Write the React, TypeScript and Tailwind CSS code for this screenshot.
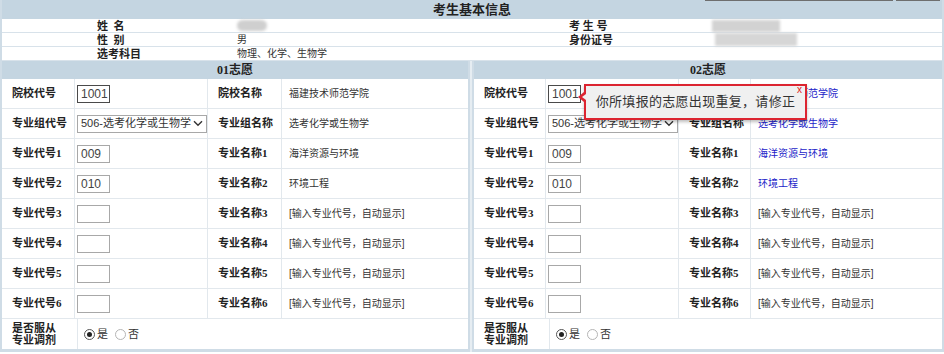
import React from "react";

const SERIF = "font-['Liberation_Serif','Noto_Sans_CJK_SC',serif]";
const SANS = "font-['Liberation_Sans','Noto_Sans_CJK_SC',sans-serif]";

type Row = {
  label: string;
  code?: string;
  dark?: boolean;
  select?: string;
  label2: string;
  value?: string;
};

const ROWS: Row[] = [
  { label: "院校代号", code: "1001", dark: true, label2: "院校名称", value: "福建技术师范学院" },
  { label: "专业组代号", select: "506-选考化学或生物学", label2: "专业组名称", value: "选考化学或生物学" },
  { label: "专业代号1", code: "009", label2: "专业名称1", value: "海洋资源与环境" },
  { label: "专业代号2", code: "010", label2: "专业名称2", value: "环境工程" },
  { label: "专业代号3", code: "", label2: "专业名称3" },
  { label: "专业代号4", code: "", label2: "专业名称4" },
  { label: "专业代号5", code: "", label2: "专业名称5" },
  { label: "专业代号6", code: "", label2: "专业名称6" },
];

function CodeBox({ value, dark }: { value: string; dark?: boolean }) {
  return (
    <div
      className={`w-[33px] h-[18px] border bg-white flex items-center px-[3px] text-[12px] text-[#444] ${SANS} ${
        dark ? "border-[#4a4a4a]" : "border-[#a8a8a8]"
      }`}
    >
      {value}
    </div>
  );
}

function SelectBox({ value }: { value: string }) {
  return (
    <div className={`w-[131px] h-[18px] border border-[#a8a8a8] bg-white flex items-center justify-between pl-[3px] pr-[3px] text-[11px] text-[#333] overflow-hidden ${SANS}`}>
      <span className="whitespace-nowrap">{value}</span>
      <svg width="10" height="7" viewBox="0 0 10 7" fill="none" stroke="#333" strokeWidth="1.4" className="shrink-0">
        <path d="M1 1.2 5 5.2 9 1.2" />
      </svg>
    </div>
  );
}

function Radio({ checked, label }: { checked?: boolean; label: string }) {
  return (
    <span className={`inline-flex items-center gap-[2px] text-[11px] text-[#333] ${SANS}`}>
      <span
        className={`w-[11px] h-[11px] rounded-full border bg-white flex items-center justify-center ${
          checked ? "border-[#555]" : "border-[#b5b5b5]"
        }`}
      >
        {checked && <span className="w-[5px] h-[5px] rounded-full bg-[#222]" />}
      </span>
      {label}
    </span>
  );
}

function Panel({ title, blue, cols }: { title: string; blue?: boolean; cols: string }) {
  return (
    <div className="flex flex-col border-x-2 border-b-[3px] border-[#cfdce6] bg-white">
      <div className={`h-[18px] bg-[#c4d5e1] flex items-center justify-center text-[12px] font-bold text-[#222] ${SERIF}`}>
        {title}
      </div>
      {ROWS.map((r) => (
        <div key={r.label} className={`grid ${cols} h-[30px] border-b border-[#e2e8ed]`}>
          <div className={`flex items-center pl-[10px] border-r border-[#e2e8ed] text-[11px] font-bold text-[#222] whitespace-nowrap ${SERIF}`}>
            {r.label}
          </div>
          <div className="flex items-center pl-[2px] border-r border-[#e2e8ed]">
            {r.select ? <SelectBox value={r.select} /> : <CodeBox value={r.code ?? ""} dark={r.dark} />}
          </div>
          <div className={`flex items-center pl-[10px] border-r border-[#e2e8ed] text-[11px] font-bold text-[#222] whitespace-nowrap ${SERIF}`}>
            {r.label2}
          </div>
          <div className={`flex items-center pl-[7px] text-[10px] whitespace-nowrap ${SANS}`}>
            {r.value ? (
              <span className={blue ? "text-[#1c1cc8]" : "text-[#333]"}>{r.value}</span>
            ) : (
              <span className="text-[#333]">[输入专业代号，自动显示]</span>
            )}
          </div>
        </div>
      ))}
      <div className="grid grid-cols-[76px_1fr] h-[30px]">
        <div className={`flex flex-col justify-center pl-[10px] border-r border-[#e2e8ed] text-[11px] leading-[12px] font-bold text-[#222] ${SERIF}`}>
          <span>是否服从</span>
          <span>专业调剂</span>
        </div>
        <div className="flex items-center gap-[7px] pl-[6px]">
          <Radio checked label="是" />
          <Radio label="否" />
        </div>
      </div>
    </div>
  );
}

function InfoRow({ label, value, label2, value2 }: { label: string; value: React.ReactNode; label2?: string; value2?: React.ReactNode }) {
  const lab = `shrink-0 text-[11px] font-bold text-[#222] leading-[14px] whitespace-pre ${SERIF}`;
  return (
    <div className="flex h-[14px] border-b border-[#d8e2ea]">
      <div className="w-[95px] shrink-0" />
      <div className={`w-[140px] ${lab}`}>{label}</div>
      <div className={`w-[332px] shrink-0 flex items-center text-[10px] leading-[14px] text-[#333] ${SANS}`}>{value}</div>
      <div className={`w-[141px] ${lab}`}>{label2}</div>
      <div className="flex-1 flex items-center">{value2}</div>
    </div>
  );
}

export default function App() {
  return (
    <div className="relative w-[944px] h-[354px] overflow-hidden bg-white">
      <div className="absolute top-0 left-[705px] w-[188px] h-px bg-[#6e6e6e]" />
      <div className="absolute top-0 left-[896px] w-[44px] h-px bg-[#6e6e6e]" />

      {/* basic info */}
      <div className="border-x-2 border-[#cfdce6]">
        <div className={`h-[19px] bg-[#c4d5e1] flex items-center justify-center text-[13px] font-bold text-[#222] ${SERIF}`}>
          考生基本信息
        </div>
        <InfoRow
          label="姓  名"
          value={<div className="w-[30px] h-[11px] rounded-full bg-[#cfcfcf] blur-[1.5px]" />}
          label2="考 生 号"
          value2={<div className="ml-[2px] w-[68px] h-[12px] bg-[#d2d2d2] blur-[1.5px]" />}
        />
        <InfoRow
          label="性  别"
          value={<span>男</span>}
          label2="身份证号"
          value2={<div className="ml-[5px] w-[82px] h-[13px] bg-[#d6d6d6] blur-[1.5px]" />}
        />
        <InfoRow label="选考科目" value={<span>物理、化学、生物学</span>} />
      </div>

      {/* two choices */}
      <div className="grid grid-cols-[470px_1fr] gap-[2px] bg-[#e6edf2]">
        <Panel title="01志愿" cols="grid-cols-[73px_133px_74px_1fr]" />
        <Panel title="02志愿" blue cols="grid-cols-[72px_133px_72px_1fr]" />
      </div>

      {/* duplicate warning tooltip */}
      <div className="absolute left-[584px] top-[84px] w-[223px] h-[36px] border-2 border-[#dc2430] bg-[#f0f0f0] shadow-[0_2px_3px_rgba(0,0,0,0.25)] flex items-center justify-center">
        <span className={`text-[13px] text-[#333] tracking-[0.3px] ${SANS}`}>你所填报的志愿出现重复，请修正</span>
        <span className={`absolute right-[3px] top-[-4px] text-[10px] text-[#e02020] ${SANS}`}>x</span>
        <div className="absolute left-[-8px] top-[6px] w-0 h-0 border-y-[5px] border-y-transparent border-r-[6px] border-r-[#dc2430]" />
        <div className="absolute left-[-4px] top-[8px] w-0 h-0 border-y-[3px] border-y-transparent border-r-[4px] border-r-[#f0f0f0]" />
      </div>
    </div>
  );
}
